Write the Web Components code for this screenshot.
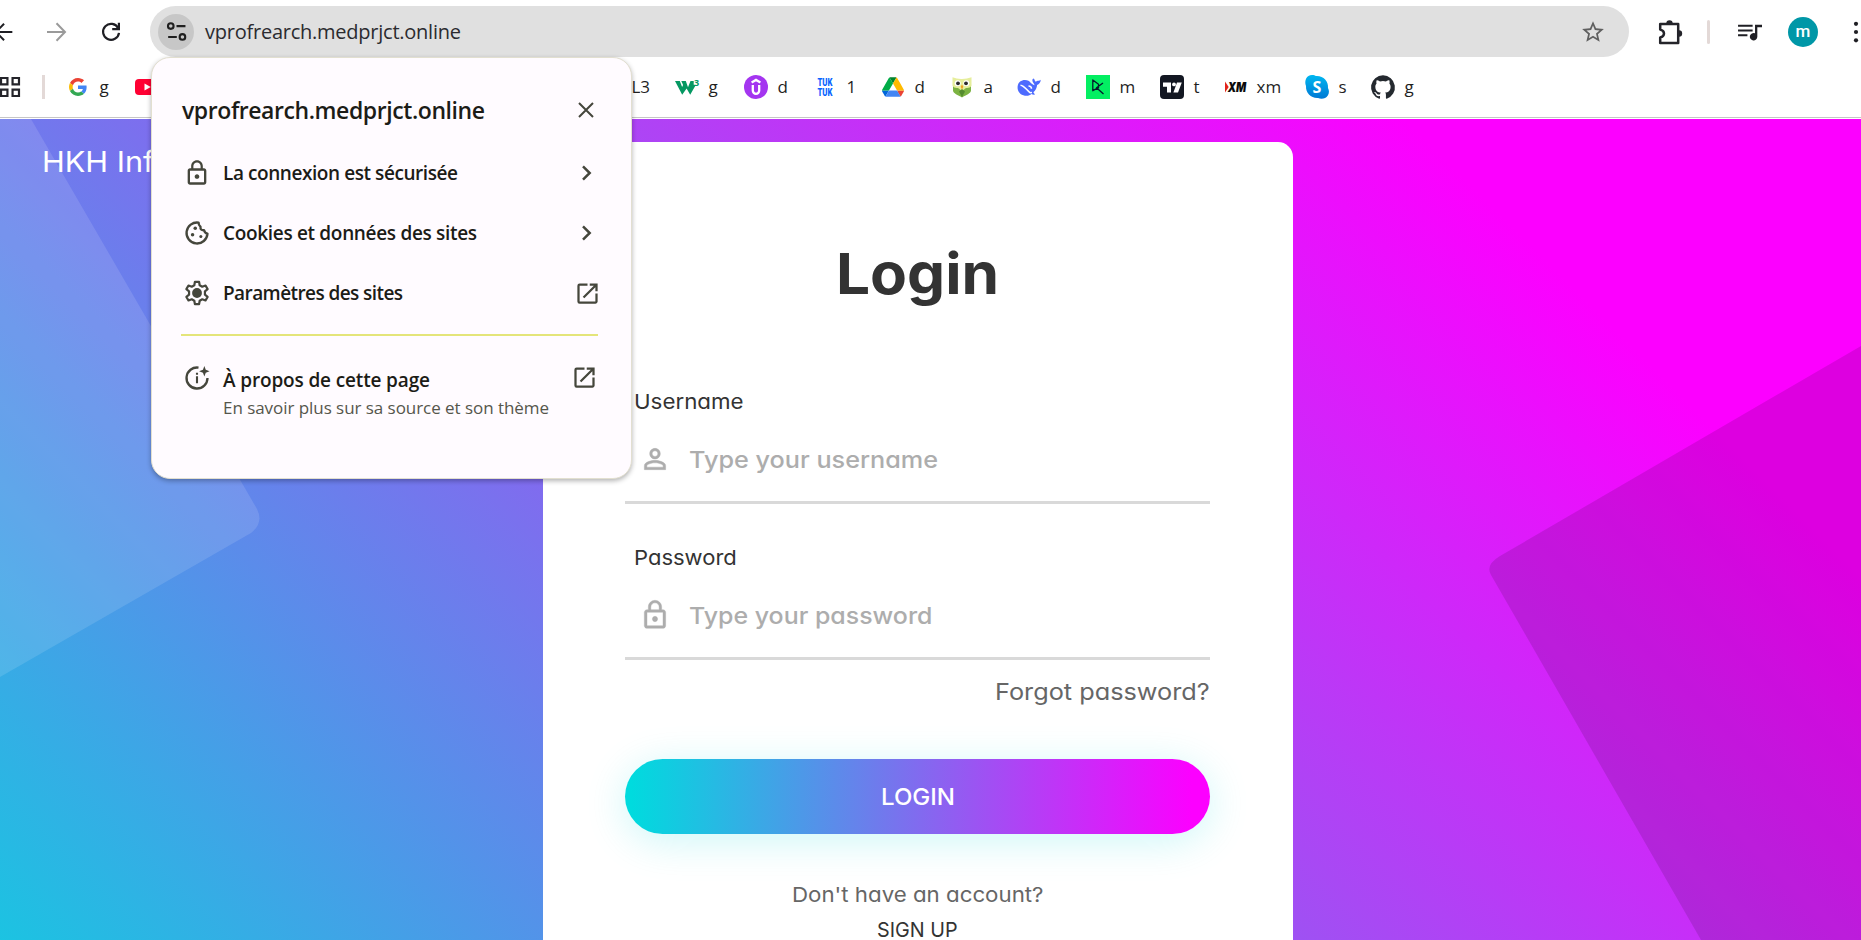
<!DOCTYPE html>
<html lang="fr">
<head>
<meta charset="utf-8">
<title>Login</title>
<style>
html,body{margin:0;height:940px;overflow:hidden;background:#fff}
body{font-family:"Open Sans","Noto Sans",sans-serif;color:#1f1f1f}
</style>
</head>
<body>
<browser-window></browser-window>
<script>
const ICONS = {
back:['0 0 24 24','<path d="M11 3 L2 12 L11 21 M2 12 H20" fill="none" stroke="#1f1f24" stroke-width="2.2"/>'],
forward:['0 0 24 24','<path d="M12.5 3.3 L21 12 L12.5 20.7 M3 12 H20.5" fill="none" stroke="#9a9a9a" stroke-width="2"/>'],
reload:['0 0 24 24','<path d="M19.2 8.2 A8 8 0 1 0 20 12.8" fill="none" stroke="#1f1f24" stroke-width="2.2"/><path d="M21 2.8 V10.2 H13.2 V8 H18.8 V2.8 Z" fill="#1f1f24"/>'],
tune:['0 0 24 24','<g fill="none" stroke="#1f1f1f" stroke-width="2"><circle cx="6.5" cy="6.8" r="2.7"/><path d="M12 6.8h8.600M4 17.200h8.300"/><circle cx="17.700" cy="17.200" r="2.700"/></g>'],
star:['0 0 24 24','<path fill="#5f5f5f" d="M22 9.24l-7.19-.62L12 2 9.19 8.63 2 9.24l5.46 4.73L5.82 21 12 17.27 18.18 21l-1.63-7.03L22 9.24zM12 15.4l-3.76 2.27 1-4.28-3.32-2.88 4.38-.38L12 6.1l1.71 4.04 4.38.38-3.32 2.88 1 4.28L12 15.4z"/>'],
puzzle:['0 0 27 27','<path fill="none" stroke="#24242a" stroke-width="2.5" stroke-linejoin="round" d="M3.2 5 H21.2 V24 H3.2 V18.4 Q7 17.6 7 14.5 Q7 11.4 3.2 10.6 Z"/><path fill="#24242a" d="M9.3 4.5 a3.2 3.2 0 0 1 6.4 0 z M22 11.3 a3.2 3.2 0 0 1 0 6.4 z"/>'],
media:['0 0 24 24','<path fill="#1f1f24" d="M1 4.5h14v2H1zM1 9h14v2H1zM1 13.7h9v2H1zM17.3 4.5H24v2.4h-4.5v9.2a3.6 3.6 0 1 1-2.2-3.3z"/>'],
dots:['0 0 24 24','<g fill="#1f1f24"><circle cx="12" cy="3.8" r="2.1"/><circle cx="12" cy="12" r="2.1"/><circle cx="12" cy="20.3" r="2.1"/></g>'],
apps:['0 0 24 24','<g fill="none" stroke="#24242a" stroke-width="2.4"><path d="M2.2 2.2h7v7h-7zM14.8 2.2h7v7h-7zM2.2 14.8h7v7h-7zM14.8 14.8h7v7h-7z"/></g>'],
google:['0 0 48 48','<path fill="#EA4335" d="M24 9.5c3.54 0 6.71 1.22 9.21 3.6l6.85-6.85C35.9 2.38 30.47 0 24 0 14.62 0 6.51 5.38 2.56 13.22l7.98 6.19C12.43 13.72 17.74 9.5 24 9.5z"/><path fill="#4285F4" d="M46.98 24.55c0-1.57-.15-3.09-.38-4.55H24v9.02h12.94c-.58 2.96-2.26 5.48-4.78 7.18l7.73 6c4.51-4.18 7.09-10.36 7.09-17.65z"/><path fill="#FBBC05" d="M10.53 28.59c-.48-1.45-.76-2.99-.76-4.59s.27-3.14.76-4.59l-7.98-6.19C.92 16.46 0 20.12 0 24c0 3.88.92 7.54 2.56 10.78l7.97-6.19z"/><path fill="#34A853" d="M24 48c6.48 0 11.93-2.13 15.89-5.81l-7.73-6c-2.15 1.45-4.92 2.3-8.16 2.3-6.26 0-11.57-4.22-13.47-9.91l-7.98 6.19C6.51 42.62 14.62 48 24 48z"/>'],
youtube:['0 0 24 24','<rect y="4" width="24" height="16" rx="4" fill="#ff0033"/><path d="M9.5 8.6 15.8 12 9.5 15.4z" fill="#fff"/>'],
w3:['0 0 24 24','<path fill="#059862" d="M0 6h4.800l2.300 6 1-2-1.800-4h4.500L13 12.200 15.500 6h3.200v2.600L18.600 9.500 20.500 10.500 15.200 19.700 11.600 13.500 7.200 19.700z"/><text x="19" y="10.600" font-family="Open Sans,sans-serif" font-weight="700" font-size="9" fill="#059862">3</text>'],
udemy:['0 0 24 24','<circle cx="12" cy="12" r="12" fill="#a435f0"/><path fill="none" stroke="#fff" stroke-width="2.3" d="M7.6 7.5 12 4.9 16.4 7.5M8.8 10v5.6a3.2 3.2 0 0 0 6.4 0V10"/>'],
tuk:['0 0 24 24','<g font-family="Roboto,sans-serif" font-weight="900" font-size="11.4" fill="#0a66ff"><text x="4.4" y="11.3" textLength="15" lengthAdjust="spacingAndGlyphs">TUK</text><text x="4.4" y="21" textLength="15" lengthAdjust="spacingAndGlyphs">TUK</text></g>'],
drive:['0 0 87.3 78','<path d="m6.6 66.85 3.85 6.65c.8 1.4 1.95 2.5 3.3 3.3l13.75-23.8h-27.5c0 1.55.4 3.1 1.2 4.5z" fill="#0066da"/><path d="m43.65 25-13.75-23.8c-1.35.8-2.5 1.9-3.3 3.3l-25.4 44a9.06 9.06 0 0 0 -1.2 4.5h27.5z" fill="#00ac47"/><path d="m73.55 76.8c1.35-.8 2.5-1.9 3.3-3.3l1.6-2.75 7.65-13.25c.8-1.4 1.2-2.95 1.2-4.5h-27.5l5.85 11.5z" fill="#ea4335"/><path d="m43.65 25 13.75-23.8c-1.35-.8-2.9-1.2-4.5-1.2h-18.5c-1.6 0-3.15.45-4.5 1.2z" fill="#00832d"/><path d="m59.8 53h-32.3l-13.75 23.8c1.35.8 2.9 1.2 4.5 1.2h50.8c1.6 0 3.15-.45 4.5-1.2z" fill="#4285f4"/><path d="m73.4 26.5-12.7-22c-.8-1.4-1.95-2.5-3.3-3.3l-13.75 23.8 16.15 28h27.45c0-1.55-.4-3.1-1.2-4.5z" fill="#ffba00"/>'],
owl:['0 0 24 24','<path fill="#7cb342" d="M3 5h18v10.500c0 3-5 4.500-9 7C8 20 3 18.500 3 15.500z"/><path fill="#e6ee9c" d="M2.500 2.200Q7 4.200 12 4t9.500-1.800V11q-2 2.600-5.500 2L12 16l-4-3q-3.500.6-5.500-2z"/><path fill="#558b2f" d="m12 14-3 2.500L12 22l3-5.500z"/><path fill="#f0a020" d="m12 9.500 1.300 2.300L12 14.500l-1.300-2.700z"/><g fill="#fff"><circle cx="7.700" cy="8.300" r="3"/><circle cx="16.300" cy="8.300" r="3"/></g><g fill="#2b2b2b"><circle cx="8" cy="8.300" r="1.900"/><circle cx="16" cy="8.300" r="1.900"/></g>'],
deepseek:['0 0 24 24','<path fill="#4d6bfe" d="M23.700 4.800c-1.500 1.200-2.700.9-3.700 1.100-1 .3-1.500 1-1.900.3-.5-1-.4-2-1.700-2.700-1 .3-1.400 2-.6 3.500.6 1.200 1.500 2 1.700 3.200-2.200-.4-4-2.500-5.500-4.200C7.500 3.700 1.300 5.300.6 11.500c-.5 5.200 3.100 8.600 7.300 9.200 3.200.4 5.200-.6 6.500-1.800 1.200.8 3 1.200 3.700.4-.6-.3-1.300-1-1.700-2 2.200-2 3.500-4.600 3.700-7.400 2-.6 3.700-2.700 3.600-5.100z"/><path fill="none" stroke="#fff" stroke-width="1.500" d="M3.500 10.200c4 .4 6.300 5.200 9.500 7.500l2-.3M11.500 11c1.600 0 3 1.100 3 2.800"/>'],
dc:['0 0 24 24','<path fill="#03ef62" d="M0 0h24v24H0z"/><path fill="none" stroke="#05192d" stroke-width="1.300" stroke-linejoin="round" d="M6.800 15.700V5l5.700 4.300v3.400zM17 8 10.500 12.800 17.500 19"/>'],
tv:['0 0 24 24','<rect width="24" height="24" rx="4" fill="#131722"/><path fill="#fff" d="M3 7.500h8v10H7v-5.700H3zM17 7.500h4.800L18 17.500h-4.600z"/><circle cx="14" cy="9.400" r="1.900" fill="#fff"/>'],
xm:['0 0 24 24','<path d="M2 6.500 5.700 12 2 17.500z" fill="#e2231a"/><text x="4.700" y="17" font-family="Inter,sans-serif" font-weight="900" font-style="italic" font-size="13.500" textLength="18.500" lengthAdjust="spacingAndGlyphs" fill="#0b0b0b">XM</text>'],
skype:['0 0 24 24','<defs><linearGradient id="s" x2="0" y2="1"><stop stop-color="#00b7f0"/><stop offset="1" stop-color="#0078d4"/></linearGradient></defs><path fill="url(#s)" d="M7 0C9 0 10 .6 11 1c7-.6 12.600 5 12 12 1.300 2.500 1.300 5-.2 7.500-2 3-6 4.300-9.800 2.500C6 23.400.6 18 1 11-1 5.500 1.500.2 7 0z"/><text x="12" y="17.700" text-anchor="middle" font-family="Open Sans,sans-serif" font-weight="700" font-size="16" fill="#fff">S</text>'],
github:['0 0 24 24','<path fill="#24292f" d="M12 .3a12 12 0 0 0-3.800 23.380c.6.120.83-.26.830-.57L9 21.070c-3.340.72-4.040-1.610-4.040-1.610-.55-1.390-1.340-1.760-1.340-1.760-1.080-.74.090-.73.090-.73 1.200.09 1.830 1.240 1.830 1.240 1.080 1.830 2.810 1.300 3.500 1 .1-.78.420-1.310.760-1.610-2.670-.3-5.470-1.330-5.470-5.930 0-1.310.470-2.380 1.240-3.220-.14-.3-.54-1.520.1-3.180 0 0 1-.32 3.300 1.230a11.500 11.500 0 0 1 6 0c2.280-1.550 3.290-1.230 3.290-1.230.64 1.660.240 2.880.120 3.180a4.650 4.650 0 0 1 1.230 3.220c0 4.610-2.800 5.630-5.480 5.920.420.360.810 1.100.810 2.220l-.01 3.290c0 .31.200.690.820.570A12 12 0 0 0 12 .3"/>'],
close:['0 0 24 24','<path d="M5 5 19 19M19 5 5 19" stroke="#45463c" stroke-width="2" fill="none"/>'],
lock:['0 0 24 24','<path fill="currentColor" d="M12 17c1.100 0 2-.9 2-2s-.9-2-2-2-2 .9-2 2 .9 2 2 2zm6-9h-1V6c0-2.760-2.240-5-5-5S7 3.240 7 6v2H6c-1.100 0-2 .9-2 2v10c0 1.100.9 2 2 2h12c1.100 0 2-.9 2-2V10c0-1.100-.9-2-2-2zM8.900 6c0-1.710 1.390-3.100 3.100-3.100s3.100 1.390 3.100 3.100v2H8.900V6zM18 20H6V10h12v10z"/>'],
person:['0 0 24 24','<path fill="currentColor" d="M12 5.900c1.160 0 2.100.940 2.100 2.100s-.940 2.100-2.100 2.100S9.900 9.160 9.900 8s.940-2.100 2.100-2.100m0 9c2.970 0 6.100 1.460 6.100 2.100v1.100H5.900V17c0-.640 3.130-2.100 6.100-2.100M12 4C9.790 4 8 5.790 8 8s1.790 4 4 4 4-1.790 4-4-1.790-4-4-4zm0 9c-2.670 0-8 1.340-8 4v3h16v-3c0-2.660-5.330-4-8-4z"/>'],
cookie:['0 0 24 24','<path fill="none" stroke="currentColor" stroke-width="2" stroke-linejoin="round" d="M13.400 3.100A9 9 0 1 0 21 12.600Q18.800 12.300 18 9.600Q14.600 9.800 15 6.700Q13.200 5.400 13.400 3.100Z"/><g fill="currentColor"><circle cx="10.500" cy="8" r="1.500"/><circle cx="8.200" cy="13.500" r="1.500"/><circle cx="15.300" cy="15" r="1.300"/></g>'],
gear:['0 0 24 24','<path fill="none" stroke="currentColor" stroke-width="1.900" stroke-linejoin="round" d="M10.200 2.500h3.600l.5 2.900 2.200 1.200 2.800-1 1.800 3.100-2.300 1.900v2.800l2.300 1.900-1.800 3.100-2.800-1-2.200 1.200-.5 2.900h-3.600l-.5-2.900-2.200-1.200-2.800 1-1.800-3.100 2.300-1.900v-2.800L2.900 8.700l1.800-3.100 2.800 1 2.200-1.200z"/><circle cx="12" cy="12" r="4.200" fill="currentColor"/>'],
info:['0 0 24 24','<path fill="none" stroke="currentColor" stroke-width="2" d="M13.300 3.100A9 9 0 1 0 21 12"/><path fill="currentColor" d="M11.100 10.600h1.800v6h-1.800zM11.100 7.400h1.800v1.900h-1.800zM18.300 1.700l1.200 3.300 3.300 1.200-3.300 1.200-1.200 3.300-1.200-3.300-3.300-1.200 3.300-1.200z"/>'],
chevron:['0 0 24 24','<path d="M9 5.300 15.700 12 9 18.700" stroke="currentColor" stroke-width="2.500" fill="none"/>'],
open:['0 0 24 24','<path fill="currentColor" d="M19 19H5V5h7V3H5a2 2 0 0 0-2 2v14a2 2 0 0 0 2 2h14c1.100 0 2-.9 2-2v-7h-2v7zM14 3v2h3.590l-9.830 9.830 1.410 1.410L19 6.410V10h2V3h-7z"/>']
};

class Base extends HTMLElement{
  mount(html){ if(!this.shadowRoot) this.attachShadow({mode:'open'}).innerHTML = html; }
}

/* <ui-icon name size>: one drawing from the icon table */
customElements.define('ui-icon', class extends Base{
  connectedCallback(){
    const [vb,body]=ICONS[this.getAttribute('name')];
    const s=this.getAttribute('size')||24;
    this.mount(`<style>:host{display:block;flex:none;width:${s}px;height:${s}px}svg{display:block;overflow:visible}</style>
    <svg width="${s}" height="${s}" viewBox="${vb}">${body}</svg>`);
  }
});

/* <fit-text width [stretch]>: fills a given width, by letter spacing or by widening the glyphs */
customElements.define('fit-text', class extends Base{
  connectedCallback(){
    const w=this.getAttribute('width'), stretch=this.hasAttribute('stretch');
    this.mount(`<style>:host{display:inline-block;white-space:pre;${stretch?`width:${w}px;text-align:left`:''}}span{display:inline-block;transform-origin:0 50%}</style><span><slot></slot></span>`);
    const span=this.shadowRoot.querySelector('span'), n=this.textContent.length;
    const fit=()=>{
      if(stretch){ span.style.transform=`scaleX(${w/span.offsetWidth})`; return; }
      span.style.letterSpacing='0';
      const gap=(w-span.getBoundingClientRect().width)/(n-1);
      span.style.letterSpacing=gap+'px'; span.style.marginRight=-gap+'px'; };
    fit(); requestAnimationFrame(fit);
  }
});

customElements.define('browser-toolbar', class extends Base{
  connectedCallback(){ this.mount(`<style>
  :host{display:grid;grid-template-columns:150px 1479px 232px;height:63px}
  .nav,.omni,.side{display:flex;align-items:center}
  .nav{height:64px}
  .nav ui-icon:nth-child(1){margin-left:-6px}.nav ui-icon:nth-child(2){margin-left:28px}.nav ui-icon:nth-child(3){margin-left:31px}
  .omni{margin-top:6px;height:51px;border-radius:26px;background:#e0e0e0;box-sizing:border-box;padding:0 23px 0 8px}
  .site{width:36px;height:36px;border-radius:50%;background:#c7c7c7;display:grid;place-items:center;margin-right:11px}
  .url{font-size:20px;line-height:30px;color:#2b2b2f;flex:1}
  .side{height:64px;padding-left:28px;box-sizing:border-box;overflow:hidden}
  .sep{flex:none;width:3px;height:24px;border-radius:2px;background:#e3d9d7;margin:0 27px 0 23px}
  .av{flex:none;width:30px;height:30px;border-radius:50%;background:#0097a7;color:#fff;font:500 17px/28px Roboto,sans-serif;text-align:center;margin:0 26px 0 26px}
  </style>
  <div class="nav"><ui-icon name="back" size="22"></ui-icon><ui-icon name="forward" size="24"></ui-icon><ui-icon name="reload" size="24"></ui-icon></div>
  <div class="omni"><div class="site"><ui-icon name="tune" size="25"></ui-icon></div><div class="url"><fit-text width="256">vprofrearch.medprjct.online</fit-text></div><ui-icon name="star" size="26"></ui-icon></div>
  <div class="side"><ui-icon name="puzzle" size="27"></ui-icon><div class="sep"></div><ui-icon name="media" size="25"></ui-icon><div class="av">m</div><ui-icon name="dots" size="24"></ui-icon></div>`); }
});

/* <bookmark-item icon span gap>: favicon plus label; span is its share of the bar */
customElements.define('bookmark-item', class extends Base{
  connectedCallback(){
    const i=this.getAttribute('icon'), s=this.getAttribute('size')||24;
    this.mount(`<style>:host{display:flex;flex:none;align-items:center;width:${this.getAttribute('span')}px}
    .b{width:24px;display:grid;place-items:center}.l{padding-left:${this.getAttribute('gap')||10}px;font-size:17px;line-height:24px;white-space:nowrap}</style>
    ${i?`<div class="b"><ui-icon name="${i}" size="${s}"></ui-icon></div>`:''}<div class="l"><slot></slot></div>`);
  }
});

customElements.define('bookmarks-bar', class extends Base{
  connectedCallback(){ this.mount(`<style>
  :host{display:flex;align-items:center;height:48px;padding-bottom:6px;border-bottom:1px solid #c6c6c6;margin-bottom:1px;box-sizing:content-box;overflow:hidden}
  .apps{margin-left:-1.500px}.sep{width:3px;height:24px;background:#e3d9d7;margin:0 21px 0 21px}
  </style>
  <ui-icon class="apps" name="apps" size="22"></ui-icon><div class="sep"></div>
  <bookmark-item icon="google" size="18" span="69">g</bookmark-item>
  <bookmark-item icon="youtube" span="496"></bookmark-item>
  <bookmark-item span="44" gap="1">L3</bookmark-item>
  <bookmark-item icon="w3" span="69">g</bookmark-item>
  <bookmark-item icon="udemy" span="69">d</bookmark-item>
  <bookmark-item icon="tuk" span="68">1</bookmark-item>
  <bookmark-item icon="drive" size="22" span="69">d</bookmark-item>
  <bookmark-item icon="owl" span="67">a</bookmark-item>
  <bookmark-item icon="deepseek" span="69">d</bookmark-item>
  <bookmark-item icon="dc" span="74">m</bookmark-item>
  <bookmark-item icon="tv" span="63">t</bookmark-item>
  <bookmark-item icon="xm" span="82">xm</bookmark-item>
  <bookmark-item icon="skype" span="66">s</bookmark-item>
  <bookmark-item icon="github" span="60">g</bookmark-item>`); }
});

customElements.define('info-row', class extends Base{
  connectedCallback(){ const end=this.getAttribute('end'); this.mount(`<style>
  :host{display:flex;align-items:center;height:60px;color:#45463c}
  ui-icon{margin-left:2px}
  .t{flex:1;margin-left:12px;color:#1c1c17;font-weight:600;font-size:19px;line-height:27px}
  .end{width:24px;display:grid;place-items:center}.end ui-icon{margin:0 1px 0 0}
  </style><ui-icon name="${this.getAttribute('icon')}" size="28"></ui-icon><div class="t"><slot></slot></div>
  <div class="end"><ui-icon name="${end}" size="${end==='open'?27:24}"></ui-icon></div>`); }
});

customElements.define('site-info-popup', class extends Base{
  connectedCallback(){ this.mount(`<style>
  :host{position:absolute;left:151px;top:57px;width:481px;height:422px;box-sizing:border-box;border:1.500px solid #e2dfd0;border-radius:19px;background:#fffbff;box-shadow:0 2px 5px rgba(0,0,0,.3);padding:24px 33px 0 29px}
  header{display:flex;align-items:center;justify-content:space-between;height:61px;color:#1c1c17;font-weight:600;font-size:23px;line-height:32px}
  header ui-icon{margin-top:-5px}
  header fit-text{margin:-6px 0 0 1px}
  .rule{height:2px;background:#e4e57a;margin:11px 0 30px 0}
  .about{display:flex;align-items:flex-start;color:#45463c}
  .about .x{flex:1;margin-left:12px}
  .a{color:#1c1c17;font-weight:600;font-size:19px;line-height:28px}
  .b{font-size:17px;line-height:28px;color:#55564c}
  .about>ui-icon:first-child{margin:-2px 0 0 2px}
  .about>ui-icon:last-child{margin-top:-2px}
  </style>
  <header><fit-text width="303">vprofrearch.medprjct.online</fit-text><ui-icon name="close" size="24"></ui-icon></header>
  <info-row icon="lock" end="chevron"><fit-text width="235">La connexion est sécurisée</fit-text></info-row>
  <info-row icon="cookie" end="chevron"><fit-text width="254">Cookies et données des sites</fit-text></info-row>
  <info-row icon="gear" end="open"><fit-text width="180">Paramètres des sites</fit-text></info-row>
  <div class="rule"></div>
  <div class="about"><ui-icon name="info" size="28"></ui-icon><div class="x"><div class="a"><fit-text width="207">À propos de cette page</fit-text></div><div class="b"><fit-text width="326">En savoir plus sur sa source et son thème</fit-text></div></div><ui-icon name="open" size="27"></ui-icon></div>`); }
});

customElements.define('login-field', class extends Base{
  connectedCallback(){ const a=n=>this.getAttribute(n); this.mount(`<style>
  :host{display:block;border-bottom:3px solid #d9d9d9}
  .l{padding-left:9px;font-size:20.500px;line-height:30px;height:30px;color:#333}
  .i{display:flex;align-items:center;height:83px;padding:1px 0 0 14px;color:#adadad;font-weight:500;font-size:23.400px;line-height:30px}
  .i ui-icon{margin-top:-1px;stroke:currentColor;stroke-width:.3px}
  .i fit-text{margin-left:18px}
  </style><div class="l"><fit-text stretch width="${a('lw')}">${a('label')}</fit-text></div>
  <div class="i"><ui-icon name="${a('icon')}" size="32"></ui-icon><fit-text stretch width="${a('pw')}">${a('placeholder')}</fit-text></div>`); }
});

customElements.define('login-card', class extends Base{
  connectedCallback(){ this.mount(`<style>
  :host{display:block;width:750px;height:900px;box-sizing:border-box;padding:101px 83px 0 82px;background:#fff;border-radius:15px;color:#666;font-size:20.500px;line-height:30px}
  h1{margin:0 0 83px;padding-top:1px;text-align:center;font-size:57px;line-height:60px;font-weight:700;color:#333}
  login-field+login-field{margin-top:39px}
  .forgot{margin-top:17px;text-align:right;font-size:23.400px}
  .btn{margin-top:52px;height:75px;border-radius:38px;display:grid;place-items:center;color:#fff;font-weight:500;font-size:23.400px;background:linear-gradient(90deg,#00dbde 1%,#fc00ff 97%);box-shadow:0 7px 42px rgba(3,216,222,.2)}
  .q{margin-top:46px;text-align:center}.s{margin-top:5px;text-align:center;color:#333}
  </style>
  <h1><fit-text stretch width="163">Login</fit-text></h1>
  <login-field label="Username" lw="110" icon="person" placeholder="Type your username" pw="249"></login-field>
  <login-field label="Password" lw="103" icon="lock" placeholder="Type your password" pw="244"></login-field>
  <div class="forgot"><fit-text stretch width="215">Forgot password?</fit-text></div>
  <div class="btn"><fit-text stretch width="74">LOGIN</fit-text></div>
  <div class="q"><fit-text stretch width="251">Don't have an account?</fit-text></div>
  <div class="s"><fit-text stretch width="81">SIGN UP</fit-text></div>`); }
});

customElements.define('login-page', class extends Base{
  connectedCallback(){ this.mount(`<style>
  :host{display:grid;grid-template-columns:543px 750px 1fr;height:821px;overflow:hidden;position:relative;font-family:Inter,"Open Sans",sans-serif;font-feature-settings:"cv11";background:linear-gradient(45deg,#00dbde -10.250%,#fc00ff 83%)}
  svg{position:absolute;inset:0}
  .brand{position:relative;padding:23px 0 0 42px;color:#fff;font-size:29px;line-height:40px}
  login-card{position:relative;margin-top:23px}
  </style>
  <svg width="1861" height="821"><path fill="#fff" fill-opacity=".12" d="M0 0H31L257 390Q264 404 251 414L0 558Z"/><path fill="#000" fill-opacity=".12" d="M1861 227 1500 437Q1485 446 1491 456L1701 821H1861Z"/></svg>
  <div class="brand"><fit-text stretch width="130">HKH Info</fit-text></div>
  <login-card></login-card>`); }
});

customElements.define('browser-window', class extends Base{
  connectedCallback(){ this.mount(`<style>:host{display:block;position:relative;width:1861px;height:940px;overflow:hidden;background:#fff}</style>
  <browser-toolbar></browser-toolbar><bookmarks-bar></bookmarks-bar><login-page></login-page><site-info-popup></site-info-popup>`); }
});
</script>
</body>
</html>
